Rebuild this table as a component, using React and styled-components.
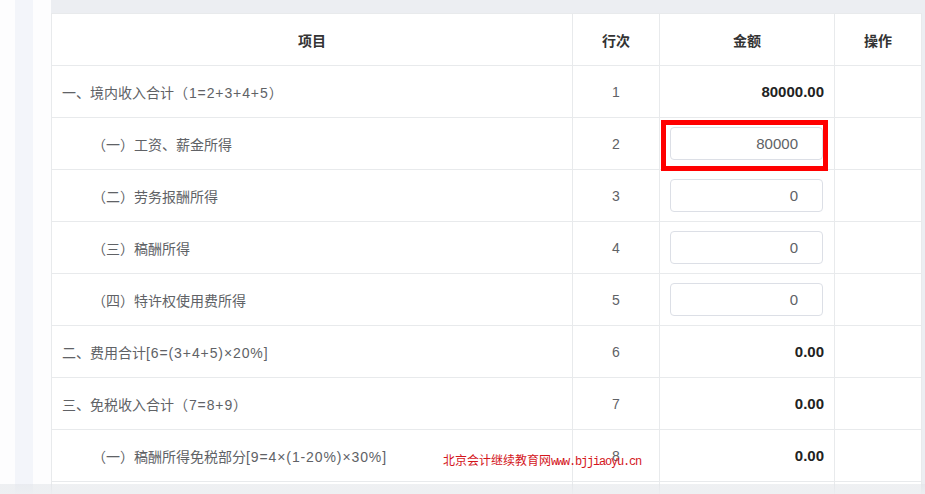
import React from "react";
import styled, { createGlobalStyle } from "styled-components";

const Global = createGlobalStyle`
  html, body { margin: 0; padding: 0; background: #ffffff; }
  body { font-family: "Liberation Sans", "Noto Sans CJK SC", sans-serif; overflow: hidden; }
  * { box-sizing: border-box; }
`;

const Page = styled.div`
  position: relative;
  display: flex;
  width: 925px;
  height: 494px;
  overflow: hidden;
`;

const Rail = styled.div`
  width: 51px;
  flex: none;
  display: flex;
  padding-left: 15px;
  background: #fdfdfe;
`;

const RailStripe = styled.div`
  width: 18px;
  background: #f3f5fa;
`;

const Panel = styled.div`
  flex: 1;
  background: #eceef2;
  padding: 13px 4px 0 0;
`;

const Table = styled.table`
  width: 870px;
  border-collapse: collapse;
  table-layout: fixed;
  background: #ffffff;
  font-size: 14px;
  color: #606266;
`;

const Row = styled.tr`
  height: 52px;
`;

const Th = styled.th`
  height: 52px;
  border: 1px solid #e8eaec;
  font-weight: bold;
  color: #333333;
  text-align: center;
  padding: 0;
  font-family: "Noto Sans CJK SC", sans-serif;
`;

const Td = styled.td`
  height: 52px;
  border: 1px solid #e8eaec;
  padding: 0 10px 0 ${(p) => (p.$indent ? "40px" : "10px")};
  text-align: ${(p) => p.$align || "left"};
  font-weight: ${(p) => (p.$bold ? "bold" : "normal")};
  color: ${(p) => (p.$bold ? "#222222" : "#606266")};
  font-size: ${(p) => (p.$bold ? "15px" : "14px")};
  font-family: "Liberation Sans", "Noto Sans CJK SC", sans-serif;
  white-space: nowrap;
`;

const Formula = styled.span`
  letter-spacing: 0.9px;
`;

const InputCell = styled.td`
  height: 52px;
  border: 1px solid #e8eaec;
  padding: 0 10px;
  position: relative;
`;

const Input = styled.div`
  height: 33px;
  width: 153px;
  border: 1px solid #dcdfe6;
  border-radius: 4px;
  display: flex;
  align-items: center;
  justify-content: flex-end;
  padding-right: 24px;
  font-size: 15px;
  color: #606266;
  font-family: "Liberation Sans", sans-serif;
`;

const Highlight = styled.div`
  position: absolute;
  left: 1px;
  top: 2px;
  width: 167px;
  height: 51px;
  border: 5px solid #ff0000;
  pointer-events: none;
`;

const Watermark = styled.div`
  position: absolute;
  left: 443px;
  top: 451px;
  color: #d4161c;
  font-size: 12px;
  font-family: "Noto Sans CJK SC", sans-serif;
  white-space: nowrap;
`;

const WatermarkUrl = styled.span`
  font-family: "Liberation Mono", monospace;
  letter-spacing: -1.2px;
`;

const ScrollShade = styled.div`
  position: absolute;
  left: 0;
  right: 0;
  bottom: 0;
  height: 10px;
  background: linear-gradient(to bottom, rgba(225, 228, 232, 0.55), rgba(236, 238, 241, 0.9));
`;

const rows = [
  { label: "一、境内收入合计", formula: "（1=2+3+4+5）", no: 1, amount: "80000.00" },
  { label: "（一）工资、薪金所得", no: 2, input: "80000", highlight: true, indent: true },
  { label: "（二）劳务报酬所得", no: 3, input: "0", indent: true },
  { label: "（三）稿酬所得", no: 4, input: "0", indent: true },
  { label: "（四）特许权使用费所得", no: 5, input: "0", indent: true },
  { label: "二、费用合计", formula: "[6=(3+4+5)×20%]", no: 6, amount: "0.00" },
  { label: "三、免税收入合计", formula: "（7=8+9）", no: 7, amount: "0.00" },
  { label: "（一）稿酬所得免税部分", formula: "[9=4×(1-20%)×30%]", no: 8, amount: "0.00", indent: true },
  { label: "", no: "", amount: "" },
];

export default function App() {
  return (
    <>
      <Global />
      <Page>
        <Rail>
          <RailStripe />
        </Rail>
        <Panel>
          <Table>
            <colgroup>
              <col style={{ width: 521 }} />
              <col style={{ width: 87 }} />
              <col style={{ width: 175 }} />
              <col style={{ width: 87 }} />
            </colgroup>
            <thead>
              <Row>
                <Th>项目</Th>
                <Th>行次</Th>
                <Th>金额</Th>
                <Th>操作</Th>
              </Row>
            </thead>
            <tbody>
              {rows.map((r, i) => (
                <Row key={i}>
                  <Td $indent={r.indent}>
                    {r.label}
                    {r.formula && <Formula>{r.formula}</Formula>}
                  </Td>
                  <Td $align="center">{r.no}</Td>
                  {r.input !== undefined ? (
                    <InputCell>
                      <Input>{r.input}</Input>
                      {r.highlight && <Highlight />}
                    </InputCell>
                  ) : (
                    <Td $align="right" $bold>
                      {r.amount}
                    </Td>
                  )}
                  <Td />
                </Row>
              ))}
            </tbody>
          </Table>
        </Panel>
        <Watermark>
          北京会计继续教育网<WatermarkUrl>www.bjjiaoyu.cn</WatermarkUrl>
        </Watermark>
        <ScrollShade />
      </Page>
    </>
  );
}
